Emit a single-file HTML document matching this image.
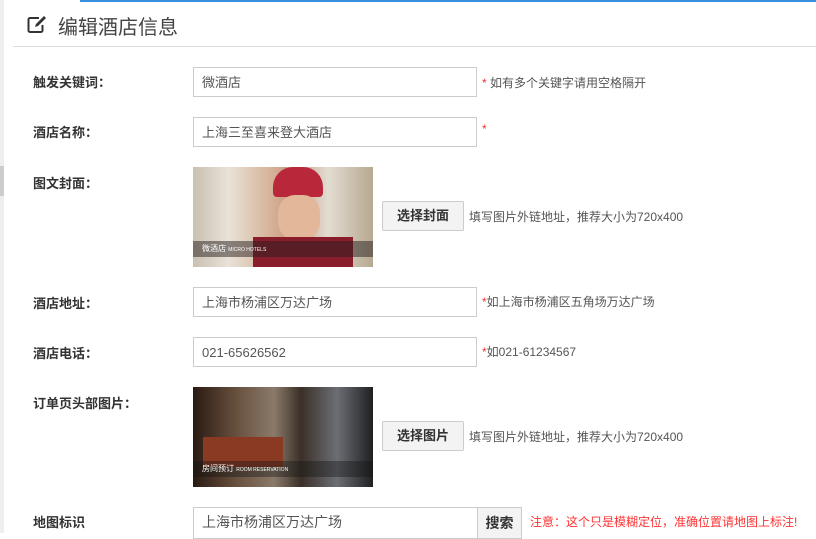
<!DOCTYPE html>
<html><head><meta charset="utf-8"><style>
*{margin:0;padding:0;box-sizing:border-box}
body{width:816px;height:533px;overflow:hidden;background:#fff;font-family:"Liberation Sans","Noto Sans CJK SC",sans-serif;position:relative;color:#333}
.a{position:absolute}
.lbl{position:absolute;left:33px;font-size:13px;font-weight:bold;color:#333}
.inp{position:absolute;left:193px;width:284px;height:30px;border:1px solid #ccc;font-size:13px;color:#555;padding:7px 8px;line-height:16px}
.hint{position:absolute;font-size:12px;color:#555}
.r{color:#e33}
.btn{position:absolute;left:382px;width:82px;height:30px;border:1px solid #ccc;border-radius:2px;background:#f3f3f3;font-size:13px;font-weight:bold;text-align:center;line-height:28px;color:#333}
</style></head><body>
<div class="a" style="left:0;top:0;width:4px;height:533px;background:#eee"></div>
<div class="a" style="left:0;top:166px;width:4px;height:30px;background:#ccc"></div>
<div class="a" style="left:80px;top:0;width:736px;height:2px;background:#3a8ee0"></div>
<svg class="a" style="left:27px;top:14px" width="22" height="20" viewBox="0 0 22 20"><path d="M12 4H3a1.5 1.5 0 0 0-1.5 1.5v11A1.5 1.5 0 0 0 3 18h11a1.5 1.5 0 0 0 1.5-1.5V11" fill="none" stroke="#333" stroke-width="2"/><path d="M8 13l1-3 8-8 2 2-8 8z" fill="#333"/></svg>
<div class="a" style="left:58px;top:11px;font-size:20px;color:#444">编辑酒店信息</div>
<div class="a" style="left:13px;top:46px;width:803px;height:1px;background:#ddd"></div>

<div class="lbl" style="top:72px">触发关键词：</div>
<div class="inp" style="top:67px">微酒店</div>
<div class="hint" style="left:482px;top:74px"><span class="r">*</span> 如有多个关键字请用空格隔开</div>

<div class="lbl" style="top:122px">酒店名称：</div>
<div class="inp" style="top:117px">上海三至喜来登大酒店</div>
<div class="hint" style="left:482px;top:122px"><span class="r">*</span></div>

<div class="lbl" style="top:173px">图文封面：</div>
<div class="a" style="left:193px;top:167px;width:180px;height:100px;background:linear-gradient(90deg,#c9c0b0 0%,#e8e2d8 20%,#d9b9a0 40%,#c89880 55%,#e2ddd2 75%,#b7a890 100%)">
<div class="a" style="left:80px;top:0;width:50px;height:30px;background:#b8283a;border-radius:20px 20px 4px 4px"></div>
<div class="a" style="left:85px;top:28px;width:42px;height:45px;background:#e2b79a;border-radius:40%"></div>
<div class="a" style="left:60px;top:70px;width:100px;height:30px;background:#8a1d2c"></div>
<div class="a" style="left:0;top:74px;width:180px;height:16px;background:rgba(40,30,30,.5);color:#fff;font-size:8px;padding:2px 9px">微酒店 <span style="font-size:5px">MICRO HOTELS</span></div>
</div>
<div class="btn" style="top:201px">选择封面</div>
<div class="hint" style="left:469px;top:208px">填写图片外链地址，推荐大小为720x400</div>

<div class="lbl" style="top:293px">酒店地址：</div>
<div class="inp" style="top:287px">上海市杨浦区万达广场</div>
<div class="hint" style="left:482px;top:293px"><span class="r">*</span>如上海市杨浦区五角场万达广场</div>

<div class="lbl" style="top:343px">酒店电话：</div>
<div class="inp" style="top:337px">021-65626562</div>
<div class="hint" style="left:482px;top:343px"><span class="r">*</span>如021-61234567</div>

<div class="lbl" style="top:393px">订单页头部图片：</div>
<div class="a" style="left:193px;top:387px;width:180px;height:100px;background:linear-gradient(90deg,#2a1a12 0%,#6a5240 25%,#8a7a6a 45%,#3a3028 60%,#6c6e74 80%,#1e2022 100%)">
<div class="a" style="left:10px;top:50px;width:80px;height:30px;background:#8a3a22"></div>
<div class="a" style="left:0;top:74px;width:180px;height:16px;background:rgba(20,20,20,.4);color:#fff;font-size:8px;padding:2px 9px">房间预订 <span style="font-size:5px">ROOM RESERVATION</span></div>
</div>
<div class="btn" style="top:421px">选择图片</div>
<div class="hint" style="left:469px;top:428px">填写图片外链地址，推荐大小为720x400</div>

<div class="lbl" style="top:512px">地图标识</div>
<div class="inp" style="top:507px;width:285px;height:32px;font-size:14px;padding:6px 8px">上海市杨浦区万达广场</div>
<div class="a" style="left:477px;top:507px;width:45px;height:32px;border:1px solid #ccc;background:#f3f3f3;font-size:14px;font-weight:bold;text-align:center;line-height:30px">搜索</div>
<div class="hint" style="left:530px;top:513px;color:#f33">注意：这个只是模糊定位，准确位置请地图上标注!</div>
</body></html>
